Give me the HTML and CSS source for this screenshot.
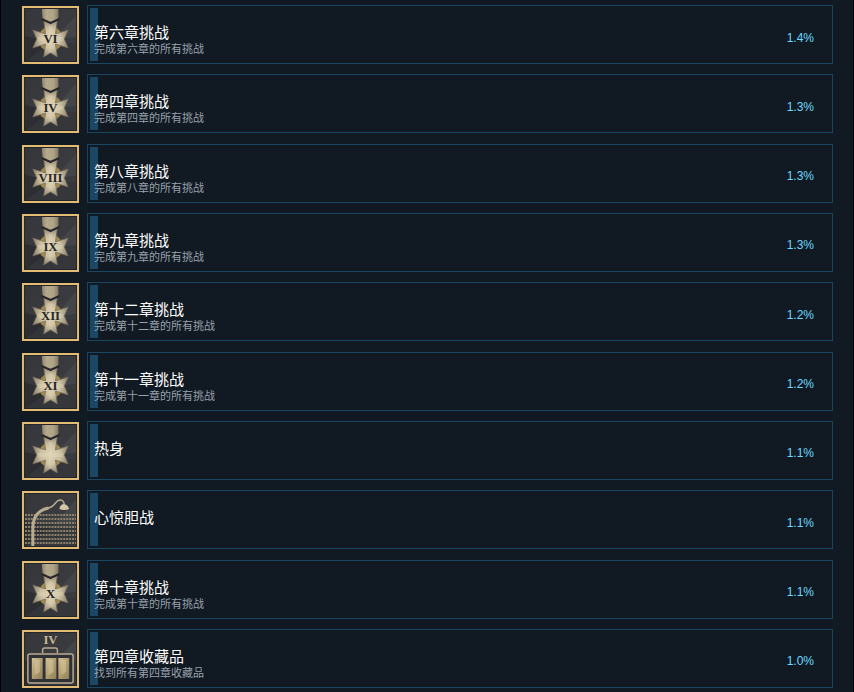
FILE: index.html
```
<!DOCTYPE html>
<html lang="zh-CN">
<head>
<meta charset="utf-8">
<title>全球成就</title>
<link rel="stylesheet" href="styles.css">
</head>
<body>
<svg class="defs" aria-hidden="true">
  <defs>
    <linearGradient id="tile" x1="0" y1="0" x2="1" y2="1">
      <stop offset="0" stop-color="#34363a"/><stop offset="1" stop-color="#3e4044"/>
    </linearGradient>
    <linearGradient id="ribbon">
      <stop offset="0" stop-color="#8c816a"/><stop offset=".3" stop-color="#b5a98d"/><stop offset=".7" stop-color="#afa387"/><stop offset="1" stop-color="#857b64"/>
    </linearGradient>
    <radialGradient id="metal">
      <stop offset="0" stop-color="#e0d4b6"/><stop offset=".55" stop-color="#cdc1a3"/><stop offset="1" stop-color="#958b75"/>
    </radialGradient>
    <linearGradient id="bar" x1="0" y1="0" x2="1" y2="1">
      <stop offset="0" stop-color="#d0c198"/><stop offset=".5" stop-color="#b19d6c"/><stop offset="1" stop-color="#8f815d"/>
    </linearGradient>
    <pattern id="tiles" x="3" y="23" width="3" height="4" patternUnits="userSpaceOnUse">
      <rect width="2" height="2" fill="#8c816c"/>
    </pattern>
    <g id="back">
      <rect width="58" height="58" fill="url(#tile)"/>
      <path d="M29 37L58 6V37Z" fill="#4a4b4e" opacity=".6"/>
      <path d="M0 29L29 37L0 58Z" fill="#28292d" opacity=".6"/>
      <path d="M0 30Q29 36 58 30V58H0Z" fill="#292b2f" opacity=".35"/>
    </g>
    <g id="frame">
      <rect x="2.500" y="2.500" width="53" height="53" fill="none" stroke="#24262c"/>
      <rect x="1" y="1" width="56" height="56" fill="none" stroke="#e3bb73" stroke-width="2"/>
    </g>
    <g id="medal">
      <use href="#back"/>
      <path d="M20 0H37V14L29 18L21 14Z" fill="url(#ribbon)"/>
      <circle cx="29" cy="33" r="12.500" fill="#a28a50"/>
      <path d="M22 14L29 18L36 14L34 28L47 24L43 33L47 42L34 38L36 51L29 47L22 51L24 38L11 42L15 33L11 24L24 28Z" fill="url(#metal)" stroke="#6f6858" stroke-width=".7"/>
      <path d="M29 20V46M16 33H42" stroke="#e6dabd" stroke-width="4" opacity=".3"/>
      <path d="M20 13L29 17L38 13" fill="none" stroke="#25272b" stroke-width="2"/>
    </g>
  </defs>
</svg>
<main class="list">
  <article class="row">
    <svg class="icon" viewBox="0 0 58 58" preserveAspectRatio="none"><use href="#medal"/><text class="numeral" x="29" y="37">VI</text><use href="#frame"/></svg>
    <div class="box"><div class="fill"></div><div class="text"><h3>第六章挑战</h3><p>完成第六章的所有挑战</p></div><span class="percent">1.4%</span></div>
  </article>
  <article class="row">
    <svg class="icon" viewBox="0 0 58 58" preserveAspectRatio="none"><use href="#medal"/><text class="numeral" x="29" y="37">IV</text><use href="#frame"/></svg>
    <div class="box"><div class="fill"></div><div class="text"><h3>第四章挑战</h3><p>完成第四章的所有挑战</p></div><span class="percent">1.3%</span></div>
  </article>
  <article class="row">
    <svg class="icon" viewBox="0 0 58 58" preserveAspectRatio="none"><use href="#medal"/><text class="numeral" x="29" y="37">VIII</text><use href="#frame"/></svg>
    <div class="box"><div class="fill"></div><div class="text"><h3>第八章挑战</h3><p>完成第八章的所有挑战</p></div><span class="percent">1.3%</span></div>
  </article>
  <article class="row">
    <svg class="icon" viewBox="0 0 58 58" preserveAspectRatio="none"><use href="#medal"/><text class="numeral" x="29" y="37">IX</text><use href="#frame"/></svg>
    <div class="box"><div class="fill"></div><div class="text"><h3>第九章挑战</h3><p>完成第九章的所有挑战</p></div><span class="percent">1.3%</span></div>
  </article>
  <article class="row">
    <svg class="icon" viewBox="0 0 58 58" preserveAspectRatio="none"><use href="#medal"/><text class="numeral" x="29" y="37">XII</text><use href="#frame"/></svg>
    <div class="box"><div class="fill"></div><div class="text"><h3>第十二章挑战</h3><p>完成第十二章的所有挑战</p></div><span class="percent">1.2%</span></div>
  </article>
  <article class="row">
    <svg class="icon" viewBox="0 0 58 58" preserveAspectRatio="none"><use href="#medal"/><text class="numeral" x="29" y="37">XI</text><use href="#frame"/></svg>
    <div class="box"><div class="fill"></div><div class="text"><h3>第十一章挑战</h3><p>完成第十一章的所有挑战</p></div><span class="percent">1.2%</span></div>
  </article>
  <article class="row">
    <svg class="icon" viewBox="0 0 58 58" preserveAspectRatio="none"><use href="#medal"/><use href="#frame"/></svg>
    <div class="box"><div class="fill"></div><div class="text"><h3>热身</h3></div><span class="percent">1.1%</span></div>
  </article>
  <article class="row">
    <svg class="icon" viewBox="0 0 58 58" preserveAspectRatio="none">
      <use href="#back"/>
      <rect x="3" y="23" width="52" height="33" fill="url(#tiles)"/>
      <path d="M11 56V38Q11 20 27 17" fill="none" stroke="#b9ab91" stroke-width="3"/>
      <path d="M26 17C34 17 33 9 39 9Q42 9 43 13" fill="none" stroke="#b9ab91" stroke-width="1.500"/>
      <path d="M38 18Q39 13 43 13Q47 14 48 18Q43 20 38 18Z" fill="#d4c6a9"/>
      <use href="#frame"/>
    </svg>
    <div class="box"><div class="fill"></div><div class="text"><h3>心惊胆战</h3></div><span class="percent">1.1%</span></div>
  </article>
  <article class="row">
    <svg class="icon" viewBox="0 0 58 58" preserveAspectRatio="none"><use href="#medal"/><text class="numeral" x="29" y="37">X</text><use href="#frame"/></svg>
    <div class="box"><div class="fill"></div><div class="text"><h3>第十章挑战</h3><p>完成第十章的所有挑战</p></div><span class="percent">1.1%</span></div>
  </article>
  <article class="row">
    <svg class="icon" viewBox="0 0 58 58" preserveAspectRatio="none">
      <use href="#back"/>
      <text class="numeral light" x="29" y="14">IV</text>
      <path d="M21 23V20Q21 18 23 18H34Q36 18 36 20V23" fill="none" stroke="#b9ab91" stroke-width="1.500"/>
      <rect x="6" y="24" width="46" height="29" rx="2" fill="#303136" stroke="#b9ab91" stroke-width="1.500"/>
      <g fill="url(#bar)"><rect x="10" y="28" width="11" height="21"/><rect x="24" y="28" width="11" height="21"/><rect x="37" y="28" width="11" height="21"/></g>
      <path d="M13 30H18V42L13 45ZM27 30H32V42L27 45ZM40 30H45V42L40 45Z" fill="#ddcfaa" opacity=".45"/>
      <use href="#frame"/>
    </svg>
    <div class="box"><div class="fill"></div><div class="text"><h3>第四章收藏品</h3><p>找到所有第四章收藏品</p></div><span class="percent">1.0%</span></div>
  </article>
</main>
</body>
</html>
```
FILE: styles.css
```
* { box-sizing: border-box; }
body {
  margin: 0;
  background: #111922;
  font-family: "Liberation Sans", "Noto Sans CJK SC", sans-serif;
}
.defs { position: absolute; width: 0; height: 0; }
.list {
  display: flex;
  flex-direction: column;
  justify-content: space-between;
  gap: 10px;
  min-height: 100vh;
  padding: 5px 20px 4px 21px;
  border-left: 1px solid #000;
  border-right: 1px solid #000;
}
.row { display: flex; align-items: flex-end; gap: 8px; }
.icon { display: block; flex: none; width: 57px; height: 58px; }
.numeral {
  font: bold 13px "Liberation Serif", serif;
  text-anchor: middle;
  fill: #272727;
}
.numeral.light { fill: #c6b793; }
.box {
  display: flex;
  flex: 1;
  min-height: 59px;
  padding: 2px;
  border: 1px solid #1a4560;
}
.fill { flex: none; width: 8px; background: #1a4864; }
.text { flex: 1; margin-left: -4px; padding-top: 15px; }
h3, p { margin: 0; font-weight: 400; }
h3 { color: #fff; font-size: 15px; line-height: 20px; }
p { color: #98a1ac; font-size: 11px; line-height: 12px; }
.percent {
  align-self: center;
  padding: 6px 16px 0 0;
  color: #6cdaff;
  font-size: 12px;
  line-height: 14px;
}
```
